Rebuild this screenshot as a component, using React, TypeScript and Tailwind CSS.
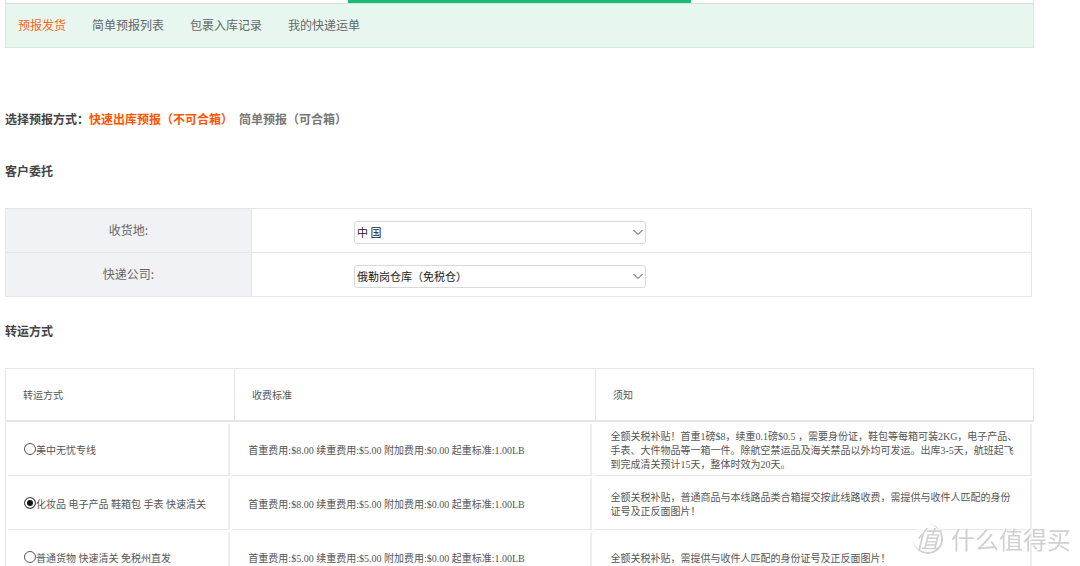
import React, { useState } from 'react';

const menu = ['预报发货', '简单预报列表', '包裹入库记录', '我的快递运单'];

const lines = [
  {
    id: 'meizhong',
    name: '美中无忧专线',
    price: '首重费用:$8.00 续重费用:$5.00 附加费用:$0.00 起重标准:1.00LB',
    note: '全额关税补贴！首重1磅$8，续重0.1磅$0.5 ，需要身份证，鞋包等每箱可装2KG，电子产品、手表、大件物品等一箱一件。除航空禁运品及海关禁品以外均可发运。出库3-5天，航班起飞到完成清关预计15天，整体时效为20天。',
  },
  {
    id: 'huazhuang',
    name: '化妆品 电子产品 鞋箱包 手表 快速清关',
    price: '首重费用:$8.00 续重费用:$5.00 附加费用:$0.00 起重标准:1.00LB',
    note: '全额关税补贴，普通商品与本线路品类合箱提交按此线路收费，需提供与收件人匹配的身份证号及正反面图片！',
  },
  {
    id: 'putong',
    name: '普通货物 快速清关 免税州直发',
    price: '首重费用:$5.00 续重费用:$5.00 附加费用:$0.00 起重标准:1.00LB',
    note: '全额关税补贴，需提供与收件人匹配的身份证号及正反面图片！',
  },
];

function SelectRow({ id, label, options }: { id: string; label: string; options: string[] }) {
  return (
    <tr className="h-11">
      <th scope="row" className="border-b border-r border-[#e4e5e9] bg-[#f1f2f5] pb-0.5 text-center font-normal text-[#666]">
        <label htmlFor={id}>{label}</label>
      </th>
      <td className="border-b border-[#e4e5e9] pt-1 pl-[102px]">
        <div className="relative w-[292px] max-w-full">
          <select
            id={id}
            className="block h-[23px] w-full appearance-none rounded-[3px] border border-[#d9d9dc] bg-white pb-0.5 pl-[2px] text-[11px] text-[#222]"
          >
            {options.map((o) => (
              <option key={o}>{o}</option>
            ))}
          </select>
          <svg
            className="pointer-events-none absolute top-2 right-[3px] h-[7px] w-[10px]"
            viewBox="0 0 10 7"
            fill="none"
            stroke="#444"
          >
            <path d="M0.5 1L5 5.5L9.5 1" />
          </svg>
        </div>
      </td>
    </tr>
  );
}

export default function App() {
  const [line, setLine] = useState('huazhuang');

  return (
    <div className="bg-white pr-[46px] pl-[5px] font-['Noto_Sans_CJK_SC',sans-serif] text-[12px] leading-5 text-[#444]">
      {/* 顶部标签 */}
      <div className="grid h-[3px] grid-cols-3 border-x border-[#ddd]">
        <div className="col-start-2 bg-[#17bf74]" />
      </div>

      <nav className="flex h-[45px] items-center gap-[26px] border border-[#cdeede] border-t-[#d9dfdc] bg-[#e7f7f0] px-3 pb-0.5">
        {menu.map((m, i) => (
          <a key={m} href="#" className={i === 0 ? 'text-[#ff6622]' : 'text-[#666]'}>
            {m}
          </a>
        ))}
      </nav>

      {/* 预报方式 */}
      <div className="mt-[61px] flex font-bold">
        <span>选择预报方式：</span>
        <a href="#" className="text-[#ff5500]">快速出库预报（不可合箱）</a>
        <a href="#" className="ml-1.5 text-[#777]">简单预报（可合箱）</a>
      </div>

      <h2 className="mt-8 font-bold">客户委托</h2>

      <div className="mt-[27px] pr-[2px]">
        <table className="w-full table-fixed border-separate border-spacing-0 border border-b-0 border-[#e4e5e9]">
          <colgroup>
            <col className="w-[24%]" />
            <col />
          </colgroup>
          <tbody>
            <SelectRow id="country" label="收货地:" options={['中 国']} />
            <SelectRow id="company" label="快递公司:" options={['俄勒岗仓库（免税仓）']} />
          </tbody>
        </table>
      </div>

      <h2 className="mt-6 font-bold">转运方式</h2>

      <table className="mt-[27px] w-full table-fixed border-separate border-spacing-0 font-['Liberation_Serif','Noto_Sans_CJK_SC',serif] text-[10px] leading-[14px] text-[#555]">
        <colgroup>
          <col className="w-[22.25%]" />
          <col className="w-[35.1%]" />
          <col />
        </colgroup>
        <thead>
          <tr className="h-[54px] text-left">
            <th className="border-t border-b-2 border-l border-[#e4e4ea] pt-0.5 pl-[17px] font-normal">转运方式</th>
            <th className="border-t border-b-2 border-l border-[#e4e4ea] pt-0.5 pl-[17px] font-normal">收费标准</th>
            <th className="border-x border-t border-b-2 border-[#e4e4ea] pt-0.5 pl-[17px] font-normal">须知</th>
          </tr>
        </thead>
        <tbody>
          <tr>
            <td colSpan={3} className="border-l border-[#e4e4ea]">
              <table className="w-full table-fixed border-separate border-spacing-[2px]">
                <colgroup>
                  <col className="w-[21.8%]" />
                  <col className="w-[35.3%]" />
                  <col />
                </colgroup>
                <tbody>
                  {lines.map((l) => (
                    <tr key={l.id} className="h-[52px]">
                      <td className="border-r-2 border-b border-r-[#eeeef1] border-b-[#e6e6ea] pt-0.5 pl-4">
                        <label className="flex items-center">
                          <input
                            type="radio"
                            name="line"
                            value={l.id}
                            checked={line === l.id}
                            onChange={() => setLine(l.id)}
                            className="mb-1 h-3 w-3 shrink-0 appearance-none rounded-full border border-[#555] bg-white checked:bg-[#111] checked:shadow-[inset_0_0_0_2px_white]"
                          />
                          {l.name}
                        </label>
                      </td>
                      <td className="border-r-2 border-b border-r-[#eeeef1] border-b-[#e6e6ea] pt-0.5 pl-4">{l.price}</td>
                      <td className="border-r-2 border-b border-r-[#eeeef1] border-b-[#e6e6ea] pt-0.5 pr-[11px] pl-4">{l.note}</td>
                    </tr>
                  ))}
                </tbody>
              </table>
            </td>
          </tr>
        </tbody>
      </table>

      {/* 水印 */}
      <div className="pointer-events-none fixed right-[9px] bottom-3 flex items-center gap-2 text-[24px] leading-7 text-[#d0d0d0] [text-shadow:-1px_-1px_0_white]">
        <span className="flex h-[30px] w-[30px] items-center justify-center rounded-full border-r-2 border-b-2 border-[#d0d0d0] bg-white/60 italic">
          值
        </span>
        <span>什么值得买</span>
      </div>
    </div>
  );
}
